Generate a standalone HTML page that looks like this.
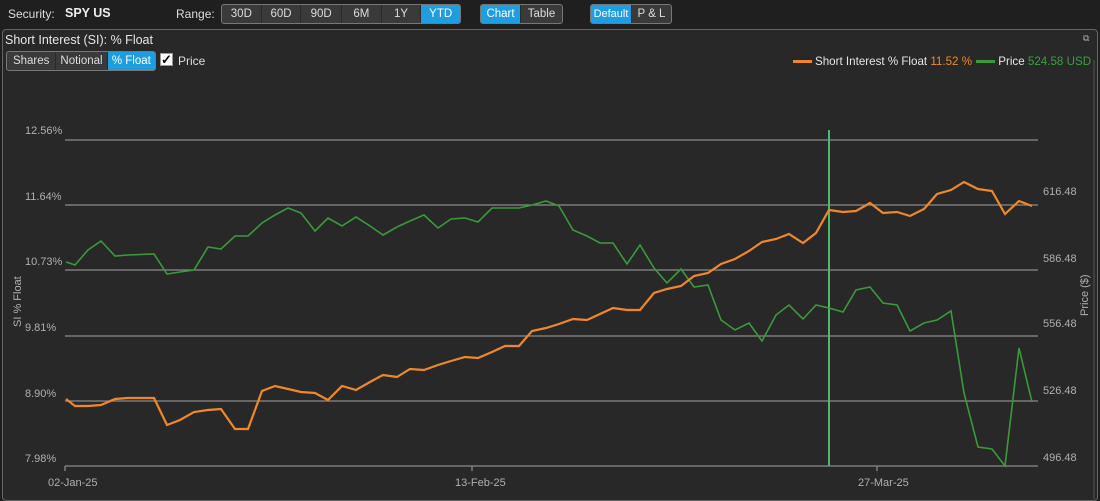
<!DOCTYPE html>
<html><head><meta charset="utf-8"><style>
*{box-sizing:border-box;margin:0;padding:0}
body{width:1100px;height:499px;background:#1f1f1f;font-family:"Liberation Sans",sans-serif;color:#ddd;font-size:12px;position:relative;overflow:hidden}
.t{position:absolute;white-space:nowrap}
.grp{position:absolute;display:flex;border:1px solid #777;border-radius:3px;height:20px;overflow:hidden;background:#3a3a3a}
.grp div{display:flex;align-items:center;justify-content:center;font-size:11.5px;color:#ddd;border-right:1px solid #2a2a2a;white-space:nowrap;overflow:hidden}
.grp div:last-child{border-right:none}
.grp .on{background:#1e9ee0;color:#fff}
#panel{position:absolute;left:2px;top:29px;width:1096px;height:472px;background:#282828;border:1px solid #666;border-radius:4px}
</style></head><body>
<div class="t" style="left:8px;top:7px;font-size:12px">Security:</div>
<div class="t" style="left:65px;top:6px;font-size:12.5px;font-weight:bold;color:#eee">SPY US</div>
<div class="t" style="left:176px;top:7px">Range:</div>
<div class="grp" style="left:221px;top:4px;width:240px">
<div style="width:40px">30D</div><div style="width:40px">60D</div><div style="width:41px">90D</div><div style="width:40px">6M</div><div style="width:40px">1Y</div><div class="on" style="width:39px">YTD</div></div>
<div class="grp" style="left:480px;top:4px;width:83px"><div class="on" style="width:41px">Chart</div><div style="width:42px">Table</div></div>
<div class="grp" style="left:590px;top:4px;width:82px"><div class="on" style="width:42px;font-size:11px">Default</div><div style="width:40px">P &amp; L</div></div>
<div id="panel"></div>
<div class="t" style="left:5px;top:33px;font-size:12.5px;color:#e6e6e6">Short Interest (SI): % Float</div>
<div class="grp" style="left:6px;top:51px;width:150px;background:#3a3a3a"><div style="width:50px">Shares</div><div style="width:52px">Notional</div><div class="on" style="width:48px">% Float</div></div>
<div class="t" style="left:160px;top:53px;width:13px;height:13px;background:#fff;border:1px solid #999;color:#000;font-size:13px;line-height:12px;text-align:center;font-weight:bold">✓</div>
<div class="t" style="left:178px;top:54px">Price</div>
<div class="t" style="left:1083px;top:33px;font-size:9px;color:#aaa">⧉</div>
<div class="t" style="left:793px;top:55px;font-size:11.6px;color:#e6e6e6"><span style="display:inline-block;width:19px;height:3px;background:#f0882a;vertical-align:middle;margin-right:3px"></span>Short Interest % Float <span style="color:#f0882a">11.52 %</span> <span style="display:inline-block;width:19px;height:3px;background:#3a9a3a;vertical-align:middle;margin:0 3px 0 1px"></span>Price <span style="color:#3aa040">524.58 USD</span></div>
<svg style="position:absolute;left:0;top:0" width="1100" height="499" font-family="Liberation Sans" font-size="11" fill="#b0b0b0">
<g stroke="#8a8a8a" stroke-width="1.3">
<line x1="65" x2="1038" y1="140" y2="140"/><line x1="65" x2="1038" y1="205" y2="205"/><line x1="65" x2="1038" y1="270" y2="270"/><line x1="65" x2="1038" y1="336" y2="336"/><line x1="65" x2="1038" y1="401" y2="401"/><line x1="65" x2="1038" y1="466" y2="466"/>
<line x1="65" x2="65" y1="466" y2="471"/><line x1="472" x2="472" y1="466" y2="471"/><line x1="877" x2="877" y1="466" y2="471"/>
</g>
<line x1="1094" x2="1094" y1="60" y2="499" stroke="#555"/>
<text x="25" y="134">12.56%</text><text x="25" y="200">11.64%</text><text x="25" y="265">10.73%</text><text x="25" y="331">9.81%</text><text x="25" y="397">8.90%</text><text x="25" y="462">7.98%</text>
<text x="1043" y="195">616.48</text><text x="1043" y="262">586.48</text><text x="1043" y="327">556.48</text><text x="1043" y="394">526.48</text><text x="1043" y="461">496.48</text>
<text x="48" y="486">02-Jan-25</text><text x="455" y="486">13-Feb-25</text><text x="858" y="486">27-Mar-25</text>
<text transform="translate(21,327) rotate(-90)" font-size="11">SI % Float</text>
<text transform="translate(1088,316) rotate(-90)" font-size="11">Price ($)</text>
<line x1="829" x2="829" y1="130" y2="466" stroke="#4cba6a" stroke-width="2"/>
<polyline fill="none" stroke="#3a9a3a" stroke-width="1.6" points="66,262 75,265 88,250 101,241 115,256 128,255 154,254 167,274 180,272 194,270 208,247 221,249 235,236 248,236 262,223 275,215 288,208 301,213 315,231 328,218 342,226 356,217 370,226 383,235 397,227 410,221 424,215 438,228 451,219 465,218 478,222 492,208 505,208 519,208 532,205 546,201 559,206 573,230 587,236 600,243 613,243 627,264 640,245 654,268 667,283 681,269 694,287 708,285 721,320 735,330 749,323 762,341 776,315 789,305 803,319 816,305 829,308 843,312 856,290 870,287 883,303 897,305 910,331 924,323 937,320 951,311 964,393 978,447 992,449 1005,466 1019,348 1032,402"/>
<polyline fill="none" stroke="#f0882a" stroke-width="2.2" points="66,399 75,406 88,406 101,405 115,399 128,398 154,398 167,425 180,420 194,412 208,410 221,409 235,429 248,429 262,391 275,386 288,389 301,392 315,393 328,400 342,386 356,390 370,382 383,375 397,377 410,369 424,370 438,365 451,361 465,357 478,358 492,352 505,346 519,346 532,331 546,328 559,324 573,319 587,320 600,314 613,308 627,310 640,310 654,293 667,289 681,286 694,276 708,273 721,264 735,259 749,251 762,242 776,239 789,234 803,243 816,233 829,210 843,212 856,211 870,203 883,213 897,212 910,216 924,209 937,194 951,190 964,182 978,189 992,191 1005,214 1019,201 1032,206"/>
</svg>
</body></html>
